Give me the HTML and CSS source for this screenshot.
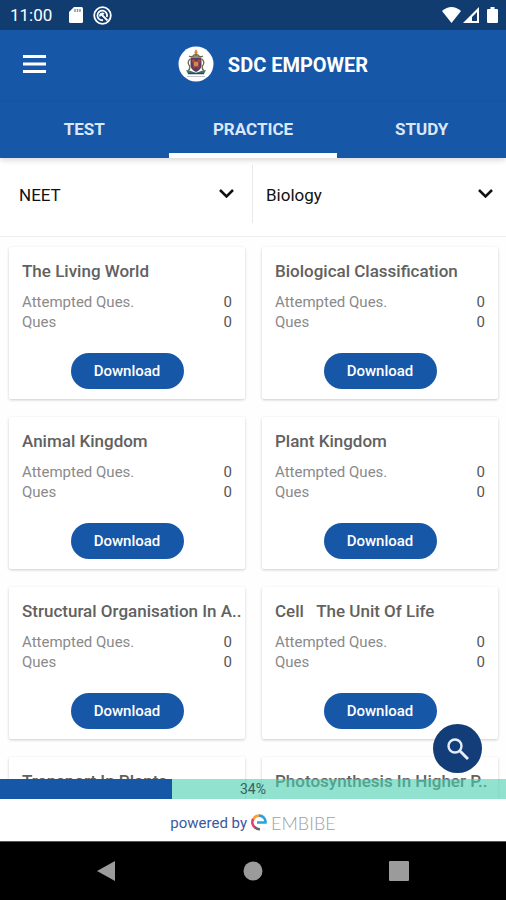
FILE: index.html
```html
<!DOCTYPE html>
<html lang="en">
<head>
<meta charset="utf-8">
<meta name="viewport" content="width=device-width, initial-scale=1">
<title>SDC Empower</title>
<link rel="stylesheet" href="styles.css">
</head>
<body>
<div class="status-bar">
  <time>11:00</time>
  <svg width="14" height="16" viewBox="0 0 14 16" aria-hidden="true"><path fill="#fff" d="M5 0h7.500Q14 0 14 1.500v13q0 1.500-1.500 1.500h-11Q0 16 0 14.500V5z"/><path stroke="#8096b4" stroke-width="1.500" d="M6 2v3M8.500 2v3M11 2v3"/></svg>
  <svg width="19" height="19" viewBox="0 0 19 19" fill="none" stroke="#fff" aria-hidden="true"><circle cx="9.500" cy="9.500" r="8.300" stroke-width="1.800"/><path stroke-width="1.800" d="M13.800 11A4.800 4.800 0 1 0 10 14.200M8 8l6.500 6.500M7 10.500a2.500 2.500 0 0 1 4-2.500"/></svg>
  <div class="signals">
    <svg width="19" height="16" viewBox="0 0 19 16" aria-hidden="true"><path fill="#fff" d="M0 4Q9.500-4 19 4L9.500 16z"/></svg>
    <svg width="16" height="16" viewBox="0 0 16 16" aria-hidden="true"><path fill="#fff" fill-rule="evenodd" d="M16 0v16H0zM14 5v9H9V10z"/></svg>
    <svg class="battery" width="11" height="16" viewBox="0 0 11 16" aria-hidden="true"><path fill="#fff" d="M3.500 0h4v2H10q1 0 1 1v12q0 1-1 1H1q-1 0-1-1V3q0-1 1-1h2.500z"/></svg>
  </div>
</div>
<header class="app-bar">
  <button class="menu" type="button" aria-label="Menu"><svg width="23" height="18" viewBox="0 0 23 18"><path stroke="#fff" stroke-width="3" d="M0 1.500h23M0 9h23M0 16.500h23"/></svg></button>
  <div class="brand">
    <svg width="36" height="36" viewBox="0 0 36 36" aria-hidden="true">
      <circle cx="18" cy="18" r="17.500" fill="#fff"/>
      <path fill="#e37a32" d="M18 3l1.500 3-.5 4h-2l-.5-4z"/>
      <path fill="none" stroke="#6d6a48" stroke-width="1.300" d="M11 10q3 2 5-1h4q2 3 5 1M12 13q-3 3-1 6t-1 6M24 13q3 3 1 6t1 6M13 11h10"/>
      <path fill="#5a3b61" d="M12.500 12h11v8q-1 4-5.500 6-4.500-2-5.500-6z"/>
      <path fill="#ad4940" d="M14 13.500h3v3h-3zM19.500 13.500h3v3h-3zM14.500 20h2.500v3zM19.500 20h2.500l-2.500 3z"/>
      <circle cx="18" cy="18" r="2.500" fill="#d88947"/>
      <path fill="#397e62" d="M8 24l5 1 5 2 5-2 5-1-2 4H10z"/>
      <path stroke="#353f73" stroke-width="1.500" d="M10 27.500h16"/>
      <path stroke="#c5c5cf" d="M9 30.500h18"/>
    </svg>
    <h1>SDC EMPOWER</h1>
  </div>
</header>
<nav class="tabs" aria-label="Sections">
  <a href="#test">TEST</a>
  <a href="#practice" class="active" aria-current="page">PRACTICE</a>
  <a href="#study">STUDY</a>
</nav>
<form class="filters">
  <div class="filter exam">
    <select aria-label="Exam"><option>NEET</option></select>
    <svg width="15" height="9" viewBox="0 0 15 9" aria-hidden="true"><path fill="none" stroke="#111" stroke-width="2.500" d="M1 1l6.500 6.500L14 1"/></svg>
  </div>
  <div class="filter subject">
    <select aria-label="Subject"><option>Biology</option></select>
    <svg width="15" height="9" viewBox="0 0 15 9" aria-hidden="true"><path fill="none" stroke="#111" stroke-width="2.500" d="M1 1l6.500 6.500L14 1"/></svg>
  </div>
</form>
<main class="content">
  <div class="cards">
    <article class="card"><h2>The Living World</h2><dl><div><dt>Attempted Ques.</dt><dd>0</dd></div><div><dt>Ques</dt><dd>0</dd></div></dl><button type="button">Download</button></article>
    <article class="card"><h2>Biological Classification</h2><dl><div><dt>Attempted Ques.</dt><dd>0</dd></div><div><dt>Ques</dt><dd>0</dd></div></dl><button type="button">Download</button></article>
    <article class="card"><h2>Animal Kingdom</h2><dl><div><dt>Attempted Ques.</dt><dd>0</dd></div><div><dt>Ques</dt><dd>0</dd></div></dl><button type="button">Download</button></article>
    <article class="card"><h2>Plant Kingdom</h2><dl><div><dt>Attempted Ques.</dt><dd>0</dd></div><div><dt>Ques</dt><dd>0</dd></div></dl><button type="button">Download</button></article>
    <article class="card"><h2>Structural Organisation In A..</h2><dl><div><dt>Attempted Ques.</dt><dd>0</dd></div><div><dt>Ques</dt><dd>0</dd></div></dl><button type="button">Download</button></article>
    <article class="card"><h2>Cell &nbsp; The Unit Of Life</h2><dl><div><dt>Attempted Ques.</dt><dd>0</dd></div><div><dt>Ques</dt><dd>0</dd></div></dl><button type="button">Download</button></article>
    <article class="card"><h2>Transport In Plants</h2></article>
    <article class="card"><h2>Photosynthesis In Higher P..</h2></article>
  </div>
  <div class="progress" role="progressbar" aria-label="Download progress" aria-valuenow="34" aria-valuemin="0" aria-valuemax="100">
    <div class="progress-fill" style="width:34%"></div>
    <span>34%</span>
  </div>
  <button class="search" type="button" aria-label="Search"><svg width="22" height="22" viewBox="0 0 22 22"><circle cx="8" cy="8" r="6.500" fill="none" stroke="#e6edf9" stroke-width="2.400"/><path stroke="#e6edf9" stroke-width="3" d="M13 13l8 8"/></svg></button>
</main>
<footer class="powered">
  <span>powered by</span>
  <svg width="16" height="17" viewBox="0 0 16 17" fill="none" stroke-width="2.600" aria-hidden="true"><path stroke="#f5a13a" d="M2.200 5.500A6.500 6.500 0 0 1 8.500 1.600"/><path stroke="#28a4dc" d="M8 1.600a6.300 6.300 0 0 1 6.500 6.900H6"/><path stroke="#ed3767" d="M2.200 5a6.500 6.500 0 0 0 2 8.500"/><path stroke="#696570" d="M3.800 13.200q2.500 2.300 5.200 2"/></svg>
  <span class="embibe">EMBIBE</span>
</footer>
<nav class="system-nav" aria-label="System">
  <button type="button" aria-label="Back"><svg width="20" height="22" viewBox="0 0 20 22"><path fill="#9b9b9b" d="M18 1v20L0 11z"/></svg></button>
  <button type="button" aria-label="Home"><svg width="20" height="20" viewBox="0 0 20 20"><circle cx="10" cy="10" r="9.500" fill="#9b9b9b"/></svg></button>
  <button type="button" aria-label="Recent apps"><svg width="20" height="20" viewBox="0 0 20 20"><rect width="20" height="20" rx="1" fill="#9b9b9b"/></svg></button>
</nav>
</body>
</html>
```
FILE: styles.css
```css
* { box-sizing: border-box; }
body {
  margin: 0;
  height: 100vh;
  display: flex;
  flex-direction: column;
  overflow: hidden;
  background: #fff;
  font-family: Roboto, "Liberation Sans", sans-serif;
}
svg { display: block; flex: none; }
button { border: 0; padding: 0; background: none; font: inherit; cursor: pointer; }
h1, h2, dl, dd { margin: 0; }

.status-bar {
  flex: none;
  height: 30px;
  padding: 0 8px 0 10px;
  display: flex;
  align-items: center;
  gap: 10px;
  background: #113c70;
  color: #fff;
}
.status-bar time { font-size: 17px; width: 49px; }
.signals { margin-left: auto; display: flex; gap: 2px; }
.battery { margin-left: 6px; }

.app-bar {
  flex: none;
  height: 72px;
  display: grid;
  grid-template-columns: 1fr auto 1fr;
  align-items: center;
  padding: 0 23px 4px;
  background: #1757a7;
  color: #fff;
}
.menu { justify-self: start; }
.brand { display: flex; align-items: center; gap: 14px; margin-left: 40px; }
.app-bar h1 { padding-top: 2px; font-size: 20px; line-height: 24px; font-weight: 700; }

.tabs {
  flex: none;
  height: 56px;
  display: grid;
  grid-template-columns: repeat(3, 1fr);
  background: #1757a7;
  position: relative;
  z-index: 1;
  box-shadow: 0 2px 6px rgba(0, 0, 0, 0.16);
}
.tabs a {
  display: flex;
  align-items: center;
  justify-content: center;
  border-bottom: 5px solid transparent;
  padding-top: 3px;
  color: #dbe6f6;
  font-size: 17px;
  font-weight: 700;
  text-decoration: none;
}
.tabs .active { border-bottom-color: #fff; }

.filters {
  flex: none;
  height: 79px;
  padding: 7px 0 13px;
  display: grid;
  grid-template-columns: 1fr 1fr;
  border-bottom: 1px solid #eee;
}
.filter { display: flex; align-items: center; padding: 0 13px; }
.exam { padding: 0 18px 0 19px; border-right: 1px solid #e9e9e9; }
.filter select {
  appearance: none;
  flex: 1;
  min-width: 0;
  border: 0;
  padding: 1px 0 0;
  background: none;
  color: #111;
  font: 400 17px/24px Roboto, "Liberation Sans", sans-serif;
}
.filter svg { margin-bottom: 2px; }

.content { flex: 1; min-height: 0; position: relative; background: #fefefe; }
.cards {
  height: 100%;
  overflow: hidden;
  padding: 10px 8px 0 9px;
  display: grid;
  grid-template-columns: 1fr 1fr;
  grid-auto-rows: 152px;
  gap: 18px 17px;
}
.card {
  display: flex;
  flex-direction: column;
  min-width: 0;
  padding: 12px 13px 0;
  border-radius: 2px;
  background: #fff;
  box-shadow: 0 1px 3px rgba(0, 0, 0, 0.2);
}
.card h2 {
  margin-right: -13px;
  color: #616161;
  font-size: 17px;
  line-height: 24px;
  font-weight: 500;
  white-space: nowrap;
}
.card dl { margin-top: 9px; color: #8a8a8a; font-size: 15px; line-height: 20px; }
.card dl div { display: flex; justify-content: space-between; }
.card dd { color: #555; }
.card button {
  align-self: center;
  width: 113px;
  height: 36px;
  margin-top: 21px;
  border-radius: 18px;
  background: #1757a7;
  color: #fff;
  font-size: 15px;
  font-weight: 500;
}

.progress {
  position: absolute;
  left: 0;
  right: 0;
  bottom: 0;
  height: 20px;
  background: rgba(71, 207, 174, 0.6);
}
.progress-fill { height: 100%; background: #1757a7; }
.progress span {
  position: absolute;
  inset: 0;
  text-align: center;
  color: #37615a;
  font-size: 14px;
  line-height: 20px;
}
.search {
  position: absolute;
  right: 24px;
  bottom: 26px;
  width: 49px;
  height: 49px;
  border-radius: 50%;
  display: grid;
  place-items: center;
  background: #123d79;
}

.powered {
  flex: none;
  height: 42px;
  display: flex;
  align-items: center;
  justify-content: center;
  gap: 4px;
  padding-top: 5px;
  color: #3959a0;
  font-size: 15px;
}
.embibe { color: #a0a0a0; font-family: Lato, sans-serif; font-weight: 300; font-size: 18px; }

.system-nav {
  flex: none;
  height: 59px;
  display: flex;
  align-items: center;
  justify-content: center;
  gap: 126px;
  background: #000;
  border-top: 1px solid #555;
}
```
